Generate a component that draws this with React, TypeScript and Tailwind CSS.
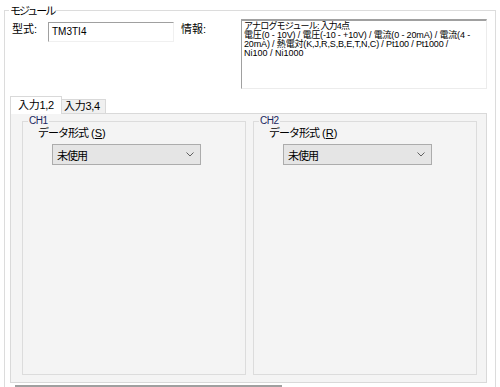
import React from "react";

const jp = "font-['Noto_Sans_CJK_JP',sans-serif]";
const mix = "font-['Liberation_Sans','Noto_Sans_CJK_JP',sans-serif]";

function Chevron() {
  return (
    <svg width="8" height="5" viewBox="0 0 8 5" className="shrink-0">
      <polyline points="0.5,0.5 4,4 7.5,0.5" fill="none" stroke="#606060" strokeWidth="1" />
    </svg>
  );
}

function ChannelGroup({ title, mnemonic }: { title: string; mnemonic: string }) {
  return (
    <fieldset className="w-[224px] h-[260px] border border-[#dcdcdc]">
      <legend className={`ml-[5px] px-[1px] text-[10px] leading-[12px] tracking-[-0.5px] text-[#1a2760] ${mix}`}>
        {title}
      </legend>
      <div className={`ml-[15px] text-[11px] leading-[13px] ${mix}`}>
        <span className="tracking-[-1px]">データ形式</span>{" "}
        <span>
          (<span className="underline">{mnemonic}</span>)
        </span>
      </div>
      <div className="ml-[29px] mt-[4px] w-[149px] h-[21px] flex items-center justify-between pl-[4px] pr-[6px] border border-[#acacac] bg-[#e5e5e5]">
        <span className={`text-[11px] leading-[14px] tracking-[-1px] ${jp}`}>未使用</span>
        <Chevron />
      </div>
    </fieldset>
  );
}

export default function App() {
  return (
    <div className="w-[500px] h-[387px] overflow-hidden bg-white text-black">
      <fieldset className="ml-[4px] mt-[3px] w-[492px] h-[420px] border border-[#dcdcdc]">
        <legend className={`ml-[4px] px-[1px] text-[11px] leading-[14px] tracking-[-2px] ${jp}`}>
          モジュール
        </legend>

        {/* model + info row */}
        <div className="flex items-start mt-[2px]">
          <div className={`ml-[7px] w-[36px] mt-[2px] text-[11px] leading-[16px] ${mix}`}>型式:</div>
          <div className="mt-[3px] w-[126px] h-[20px] border border-[#a0a0a0] border-r-[#f0f0f0] border-b-[#f0f0f0] bg-white pl-[3px] font-['Liberation_Sans',sans-serif] text-[10px] leading-[17px]">
            TM3TI4
          </div>
          <div className={`ml-[7px] w-[60px] mt-[2px] text-[11px] leading-[16px] ${mix}`}>情報:</div>
          <div className={`w-[246px] h-[70px] border-t-2 border-l border-r border-b border-[#a0a0a0] border-r-[#ececec] border-b-[#ececec] bg-white pl-[2px] pt-[1px] text-[9px] leading-[9px] whitespace-nowrap text-black ${mix}`}>
            <div className="tracking-[-0.8px]">アナログモジュール: 入力4点</div>
            <div className="tracking-[-0.15px]">電圧(0 - 10V) / 電圧(-10 - +10V) / 電流(0 - 20mA) / 電流(4 -</div>
            <div className="tracking-[-0.15px]">20mA) / 熱電対(K,J,R,S,B,E,T,N,C) / Pt100 / Pt1000 /</div>
            <div>Ni100 / Ni1000</div>
          </div>
        </div>

        {/* tabs */}
        <div className={`flex items-end ml-[5px] mt-[7px] text-[11px] ${mix}`}>
          <div className="relative z-10 -mb-px h-[18px] w-[52px] border border-b-0 border-[#d9d9d9] bg-white pl-[7px] pt-[1px] leading-[14px] tracking-[-0.3px]">
            入力1,2
          </div>
          <div className="h-[14px] w-[44px] border border-l-0 border-b-0 border-[#d9d9d9] bg-[#f0f0f0] pl-[2px] leading-[13px] tracking-[-0.3px]">
            入力3,4
          </div>
        </div>
        <div className="ml-[5px] w-[477px] h-[270px] border border-[#d9d9d9] bg-[#f4f4f4] flex gap-[7px] pl-[11px] pt-[1px]">
          <ChannelGroup title="CH1" mnemonic="S" />
          <ChannelGroup title="CH2" mnemonic="R" />
        </div>

        <div className="ml-[10px] mt-[2px] w-[267px] h-[4px] border-t-2 border-[#a0a0a0]" />
      </fieldset>
    </div>
  );
}
